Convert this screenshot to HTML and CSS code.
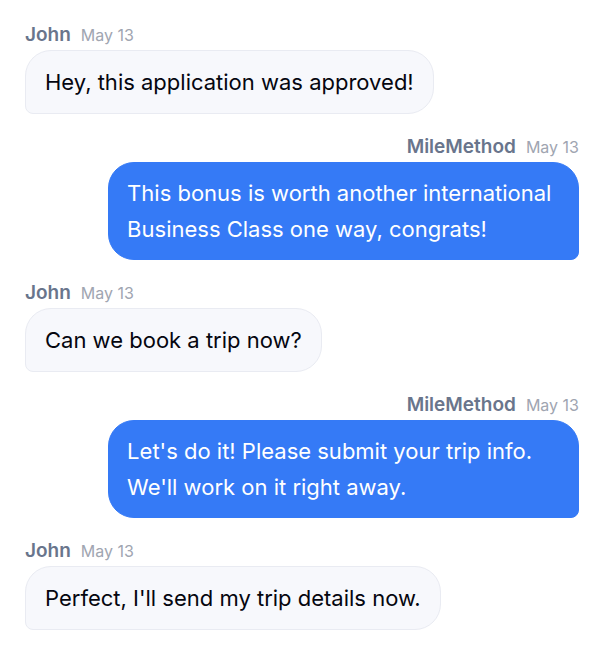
FILE: index.html
```html
<!DOCTYPE html>
<html lang="en">

<head>
    <meta charset="UTF-8">
    <meta name="viewport" content="width=device-width, initial-scale=1.0">
    <title>Messages</title>

    <link rel="stylesheet" href="styles.css">
</head>

<body>
    <main class="chat">
        <article class="message">
            <p class="meta"><span class="name">John</span> <time class="date" datetime="05-13">May 13</time></p>
            <p class="bubble">Hey, this application was approved!</p>
        </article>

        <article class="message sent">
            <p class="meta"><span class="name">MileMethod</span> <time class="date" datetime="05-13">May 13</time></p>
            <p class="bubble">This bonus is worth another international Business Class one way, congrats!</p>
        </article>

        <article class="message">
            <p class="meta"><span class="name">John</span> <time class="date" datetime="05-13">May 13</time></p>
            <p class="bubble">Can we book a trip now?</p>
        </article>

        <article class="message sent">
            <p class="meta"><span class="name">MileMethod</span> <time class="date" datetime="05-13">May 13</time></p>
            <p class="bubble">Let's do it! Please submit your trip info. We'll work on it right away.</p>
        </article>

        <article class="message">
            <p class="meta"><span class="name">John</span> <time class="date" datetime="05-13">May 13</time></p>
            <p class="bubble">Perfect, I'll send my trip details now.</p>
        </article>
    </main>
</body>

</html>
```

FILE: styles.css
```css
* {
    box-sizing: border-box;
    margin: 0;
    padding: 0;
}

body {
    background-color: #fff;
    font-family: "Inter", "Liberation Sans", sans-serif;
}

.chat {
    display: flex;
    flex-direction: column;
    gap: 20px;
    padding: 22px 21px 20px 25px;
}

.message {
    display: flex;
    flex-direction: column;
    align-items: flex-start;
}

.sent {
    align-items: flex-end;
}

.meta {
    display: flex;
    align-items: center;
    gap: 10px;
    padding-bottom: 2px;
    line-height: 26px;
}

.name {
    color: #69758c;
    font-size: 19px;
    font-weight: 600;
}

.date {
    color: #a0a5b1;
    font-size: 16px;
}

.bubble {
    max-width: 85%;
    padding: 13px 19px;
    border: 1px solid #e9ebf2;
    border-radius: 26px 26px 26px 8px;
    background-color: #f7f8fc;
    color: #05060f;
    font-size: 22px;
    line-height: 36px;
}

.sent .bubble {
    padding: 12px 18px;
    border-color: #357af6;
    border-radius: 26px 26px 8px 26px;
    background-color: #357af6;
    color: #fff;
}
```
